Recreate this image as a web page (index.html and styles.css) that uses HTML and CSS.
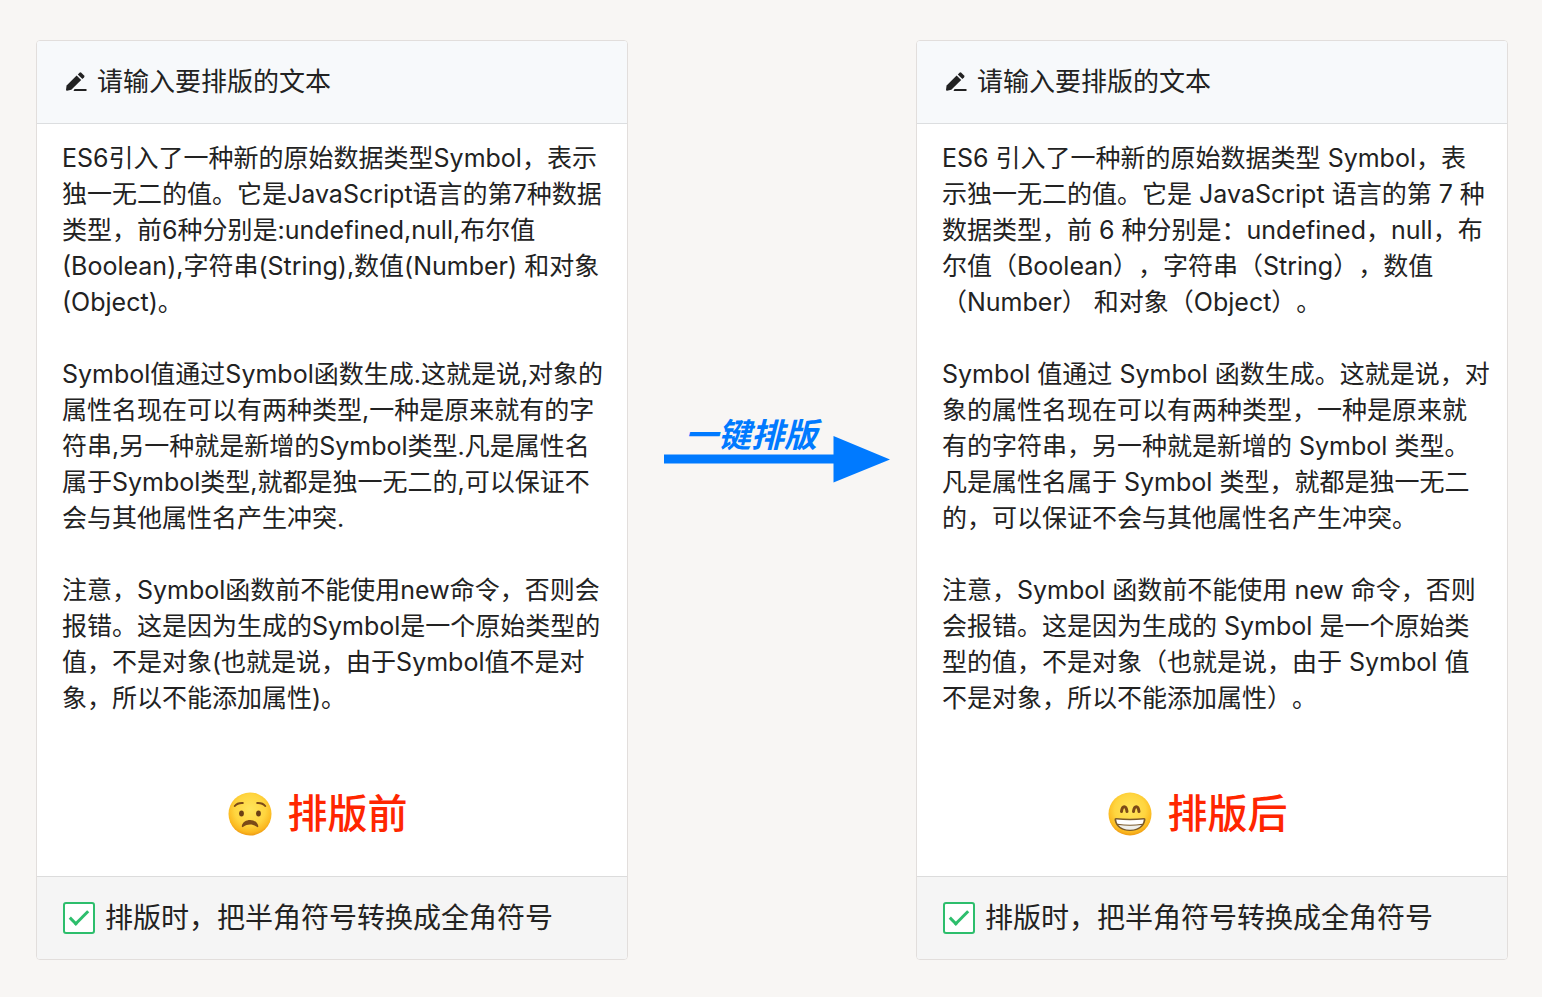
FILE: index.html
```html
<!DOCTYPE html>
<html lang="zh-CN">
<head>
    <meta charset="UTF-8">
    <meta name="viewport" content="width=device-width, initial-scale=1.0">
    <title>一键排版</title>
    <link rel="stylesheet" href="styles.css">
</head>
<body>
    <main class="compare">
        <section class="card">
            <label class="card-header" for="textBefore">
                <svg class="icon-edit" viewBox="0 0 24 22" aria-hidden="true">
                    <path d="M2 19.800q-1 0-1-1l.6-4.200L11.600 4.500l4.600 4.600L6.300 18.800z"/>
                    <path d="M12.800 3.400l1.700-1.700q.9-.8 1.800 0l2.800 2.800q.8.900 0 1.800l-1.700 1.700z"/>
                    <path d="M9.500 18h12v2h-13z"/>
                </svg>
                请输入要排版的文本
            </label>
            <div class="card-body">
                <textarea class="text" id="textBefore" rows="16" spellcheck="false">ES6引入了一种新的原始数据类型Symbol，表示
独一无二的值。它是JavaScript语言的第7种数据
类型，前6种分别是:undefined,null,布尔值
(Boolean),字符串(String),数值(Number) 和对象
(Object)。

Symbol值通过Symbol函数生成.这就是说,对象的
属性名现在可以有两种类型,一种是原来就有的字
符串,另一种就是新增的Symbol类型.凡是属性名
属于Symbol类型,就都是独一无二的,可以保证不
会与其他属性名产生冲突.

注意，Symbol函数前不能使用new命令，否则会
报错。这是因为生成的Symbol是一个原始类型的
值，不是对象(也就是说，由于Symbol值不是对
象，所以不能添加属性)。</textarea>
                <div class="caption">
                    <svg class="emoji" viewBox="0 0 44 44" aria-hidden="true">
                        <defs>
                            <radialGradient id="face" cx="50%" cy="40%" r="60%">
                                <stop offset="0" stop-color="#ffe55c"/>
                                <stop offset="0.6" stop-color="#ffd53f"/>
                                <stop offset="0.88" stop-color="#fbb81f"/>
                                <stop offset="1" stop-color="#ee9a14"/>
                            </radialGradient>
                        </defs>
                        <circle cx="22" cy="22" r="21.500" fill="url(#face)"/>
                        <path class="brow" d="M6.800 14q2.500-3.300 8-3M37.200 14q-2.500-3.300-8-3"/>
                        <ellipse cx="13.500" cy="21.500" rx="2.400" ry="3" fill="#6b4015"/>
                        <ellipse cx="30.500" cy="21.500" rx="2.400" ry="3" fill="#6b4015"/>
                        <path d="M13.800 34c1.500-8 15-8 16.500 0 .2 1.200-.8 1.400-1.500.8-4.200-3.200-9.300-3.200-13.500 0-.8.600-1.700.4-1.500-.8z" fill="#7c4a17"/>
                    </svg>
                    <span>排版前</span>
                </div>
            </div>
            <div class="card-footer">
                <input class="check" type="checkbox" id="convertBefore" checked>
                <label for="convertBefore">排版时，把半角符号转换成全角符号</label>
            </div>
        </section>

        <div class="arrow">
            <span class="arrow-label">一键排版</span>
            <svg class="arrow-line" viewBox="0 0 226 48" aria-hidden="true">
                <path d="M0 19.500h169.500V1L226 24.500 169.500 47.500V28.500H0z"/>
            </svg>
        </div>

        <section class="card">
            <label class="card-header" for="textAfter">
                <svg class="icon-edit" viewBox="0 0 24 22" aria-hidden="true">
                    <path d="M2 19.800q-1 0-1-1l.6-4.200L11.600 4.500l4.600 4.600L6.300 18.800z"/>
                    <path d="M12.800 3.400l1.700-1.700q.9-.8 1.800 0l2.800 2.800q.8.900 0 1.800l-1.700 1.700z"/>
                    <path d="M9.500 18h12v2h-13z"/>
                </svg>
                请输入要排版的文本
            </label>
            <div class="card-body">
                <textarea class="text" id="textAfter" rows="16" spellcheck="false">ES6 引入了一种新的原始数据类型 Symbol，表
示独一无二的值。它是 JavaScript 语言的第 7 种
数据类型，前 6 种分别是：undefined，null，布
尔值（Boolean），字符串（String），数值
（Number） 和对象（Object）。

Symbol 值通过 Symbol 函数生成。这就是说，对
象的属性名现在可以有两种类型，一种是原来就
有的字符串，另一种就是新增的 Symbol 类型。
凡是属性名属于 Symbol 类型，就都是独一无二
的，可以保证不会与其他属性名产生冲突。

注意，Symbol 函数前不能使用 new 命令，否则
会报错。这是因为生成的 Symbol 是一个原始类
型的值，不是对象（也就是说，由于 Symbol 值
不是对象，所以不能添加属性）。</textarea>
                <div class="caption">
                    <svg class="emoji" viewBox="0 0 44 44" aria-hidden="true">
                        <circle cx="22" cy="22" r="21.500" fill="url(#face)"/>
                        <path class="eye" d="M13.500 19.500c.8-6.500 4.700-6.500 5.500 0M25.500 19.500c.8-6.500 4.700-6.500 5.500 0"/>
                        <path d="M8 26q14 1.500 28 0 1.800 0 1.500 2C36 35.500 30 39 22 39S8 35.500 6.500 28Q6.200 26 8 26z" fill="#7b5a2a"/>
                        <path d="M8.200 27.500q13.800 1.500 27.600 0-.3 2.200-1.300 4.200-12.500 2-25 0-1-2-1.300-4.200z" fill="#fff"/>
                        <path d="M10.300 33q11.700 1.600 23.400 0-4 4.800-11.700 4.800T10.300 33z" fill="#f0f0ec"/>
                    </svg>
                    <span>排版后</span>
                </div>
            </div>
            <div class="card-footer">
                <input class="check" type="checkbox" id="convertAfter" checked>
                <label for="convertAfter">排版时，把半角符号转换成全角符号</label>
            </div>
        </section>
    </main>
</body>
</html>
```
FILE: styles.css
```css
* {
    box-sizing: border-box;
}

body {
    margin: 0;
    padding: 40px 34px 36px 36px;
    background-color: #f8f6f4;
    color: #222;
    font-family: Inter, "Noto Sans CJK SC", sans-serif;
    text-spacing-trim: space-all;
}

.compare {
    display: grid;
    grid-template-columns: 37fr 18fr 37fr;
}

.card {
    display: flex;
    flex-direction: column;
    min-width: 0;
    border: 1px solid #e2dedc;
    border-radius: 4px;
    background-color: #fff;
    overflow: hidden;
}

.card-header {
    display: flex;
    align-items: center;
    gap: 8px;
    padding: 20px 28px;
    border-bottom: 1px solid #dcdee0;
    background-color: #f7f9fb;
    font-size: 26px;
    line-height: 42px;
}

.icon-edit {
    width: 24px;
    height: 22px;
    fill: #222;
}

.card-body {
    padding: 16px 10px 32px 25px;
}

.text {
    display: block;
    width: 100%;
    padding: 0;
    border: none;
    outline: none;
    resize: none;
    overflow: hidden;
    background: none;
    color: inherit;
    font-family: inherit;
    font-size: 25px;
    line-height: 36px;
    white-space: pre;
}

.caption {
    display: flex;
    align-items: center;
    justify-content: center;
    gap: 16px;
    margin-top: 68px;
    padding-right: 44px;
    color: #ff2600;
    font-size: 40px;
    font-weight: 500;
    line-height: 60px;
}

.emoji {
    width: 44px;
    height: 44px;
}

.brow,
.eye {
    fill: none;
    stroke: #7c4a17;
    stroke-width: 2;
    stroke-linecap: round;
}

.eye {
    stroke-width: 3;
}

.card-footer {
    display: flex;
    align-items: center;
    gap: 10px;
    padding: 20px 26px;
    border-top: 1px solid #dcdcdc;
    background-color: #f5f5f5;
    font-size: 28px;
    line-height: 42px;
}

.check {
    position: relative;
    flex: none;
    appearance: none;
    width: 32px;
    height: 32px;
    margin: 0;
    border: 2px solid #2dbe6c;
    border-radius: 3px;
    background-color: #fff;
}

.check:checked::after {
    content: "";
    position: absolute;
    left: 9px;
    top: 2px;
    width: 7px;
    height: 16px;
    border: solid #2dbe6c;
    border-width: 0 3px 3px 0;
    transform: rotate(45deg);
}

.arrow {
    display: flex;
    flex-direction: column;
    padding: 377px 26px 0 36px;
    color: #007aff;
}

.arrow-label {
    padding-left: 21px;
    font-size: 33px;
    font-style: italic;
    font-weight: 700;
    line-height: 36px;
}

.arrow-line {
    width: 100%;
    margin-top: -18px;
    fill: #007aff;
}
```
